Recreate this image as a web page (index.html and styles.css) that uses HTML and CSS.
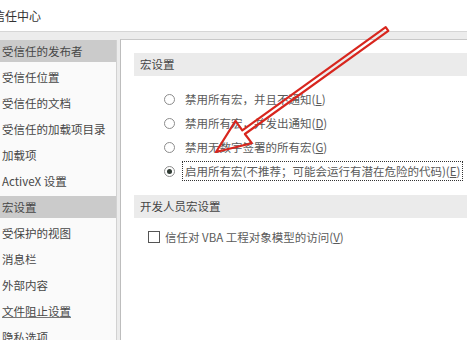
FILE: index.html
```html
<!DOCTYPE html>
<html lang="zh-CN">
<head>
    <meta charset="UTF-8">
    <title>信任中心</title>
    <link rel="stylesheet" href="styles.css">
</head>
<body>
    <div class="window">
        <div class="titlebar">信任中心</div>
        <div class="band"></div>
        <div class="main">
            <ul class="sidebar">
                <li class="item active">受信任的发布者</li>
                <li class="item">受信任位置</li>
                <li class="item">受信任的文档</li>
                <li class="item">受信任的加载项目录</li>
                <li class="item">加载项</li>
                <li class="item">ActiveX 设置</li>
                <li class="item active">宏设置</li>
                <li class="item">受保护的视图</li>
                <li class="item">消息栏</li>
                <li class="item">外部内容</li>
                <li class="item link">文件阻止设置</li>
                <li class="item">隐私选项</li>
            </ul>
            <div class="panel">
                <div class="section-head">宏设置</div>
                <div class="options">
                    <div class="option"><span class="radio"></span><span class="label">禁用所有宏，并且不通知(<u>L</u>)</span></div>
                    <div class="option"><span class="radio"></span><span class="label">禁用所有宏，并发出通知(<u>D</u>)</span></div>
                    <div class="option"><span class="radio"></span><span class="label">禁用无数字签署的所有宏(<u>G</u>)</span></div>
                    <div class="option"><span class="radio checked"></span><span class="label focus">启用所有宏(不推荐；可能会运行有潜在危险的代码)(<u>E</u>)</span></div>
                </div>
                <div class="section-head">开发人员宏设置</div>
                <div class="check-row"><span class="checkbox"></span><span class="label">信任对 VBA 工程对象模型的访问(<u>V</u>)</span></div>
            </div>
        </div>
        <svg class="arrow" width="467" height="340" viewBox="0 0 467 340">
            <polygon points="385.7,27.2 242.3,130.4 235.5,120.8 216,152 251.8,143.2 244.9,134 388.3,30.8"
                     fill="none" stroke="#d8261e" stroke-width="2.2" stroke-linejoin="round"/>
        </svg>
    </div>
</body>
</html>
```

FILE: styles.css
```css
/* styles.css */
body {
    margin: 0;
    font-family: "Noto Sans CJK SC", "Liberation Sans", sans-serif;
    font-size: 11.5px;
    color: #474747;
    background-color: #fff;
}

.window {
    position: relative;
    width: 467px;
    height: 340px;
    overflow: hidden;
}

.titlebar {
    height: 31px;
    line-height: 31px;
    margin-left: -7px;
    color: #333;
    font-size: 12px;
}

.band {
    height: 8px;
    border-top: 1px solid #d6d6d6;
    background-color: #ececec;
}

.main {
    display: flex;
    height: 300px;
    background-color: #ececec;
}

.sidebar {
    list-style: none;
    margin: 0;
    padding: 0;
    width: 116px;
    background-color: #fafafa;
    border-right: 1px solid #d2d2d2;
}

.item {
    height: 22px;
    line-height: 22px;
    margin-bottom: 4px;
    padding-left: 2px;
    white-space: nowrap;
}

.item.active {
    background-color: #cbcbcb;
}

.item.link {
    text-decoration: underline;
    text-decoration-color: #777;
}

.panel {
    flex: 1;
    margin-left: 3px;
    margin-top: -1px;
    padding: 13px 0 0 13px;
    background-color: #fff;
    border-left: 1px solid #bdbdbd;
    border-top: 1px solid #c8c8c8;
}

.section-head {
    height: 23px;
    line-height: 23px;
    padding-left: 6px;
    background-color: #ebebeb;
    color: #444;
}

.options {
    margin: 11px 0 12px;
    padding-left: 30px;
}

.option {
    display: flex;
    align-items: center;
    height: 24px;
    color: #5a5a5a;
}

.radio {
    width: 9px;
    height: 9px;
    border: 1px solid #8c8c8c;
    border-radius: 50%;
    margin-right: 10px;
    display: flex;
    align-items: center;
    justify-content: center;
    flex-shrink: 0;
}

.radio.checked::after {
    content: "";
    width: 5px;
    height: 5px;
    border-radius: 50%;
    background-color: #2f3a33;
}

.label {
    white-space: nowrap;
}

.label.focus {
    border: 1px dotted #333;
    height: 18px;
    line-height: 18px;
    padding: 0 2px;
    margin-left: -3px;
}

.check-row {
    display: flex;
    align-items: center;
    height: 24px;
    margin-top: 7px;
    padding-left: 14px;
    color: #5a5a5a;
}

.checkbox {
    width: 10px;
    height: 10px;
    border: 1px solid #555;
    margin-right: 5px;
}

.arrow {
    position: absolute;
    left: 0;
    top: 0;
    pointer-events: none;
}
```
